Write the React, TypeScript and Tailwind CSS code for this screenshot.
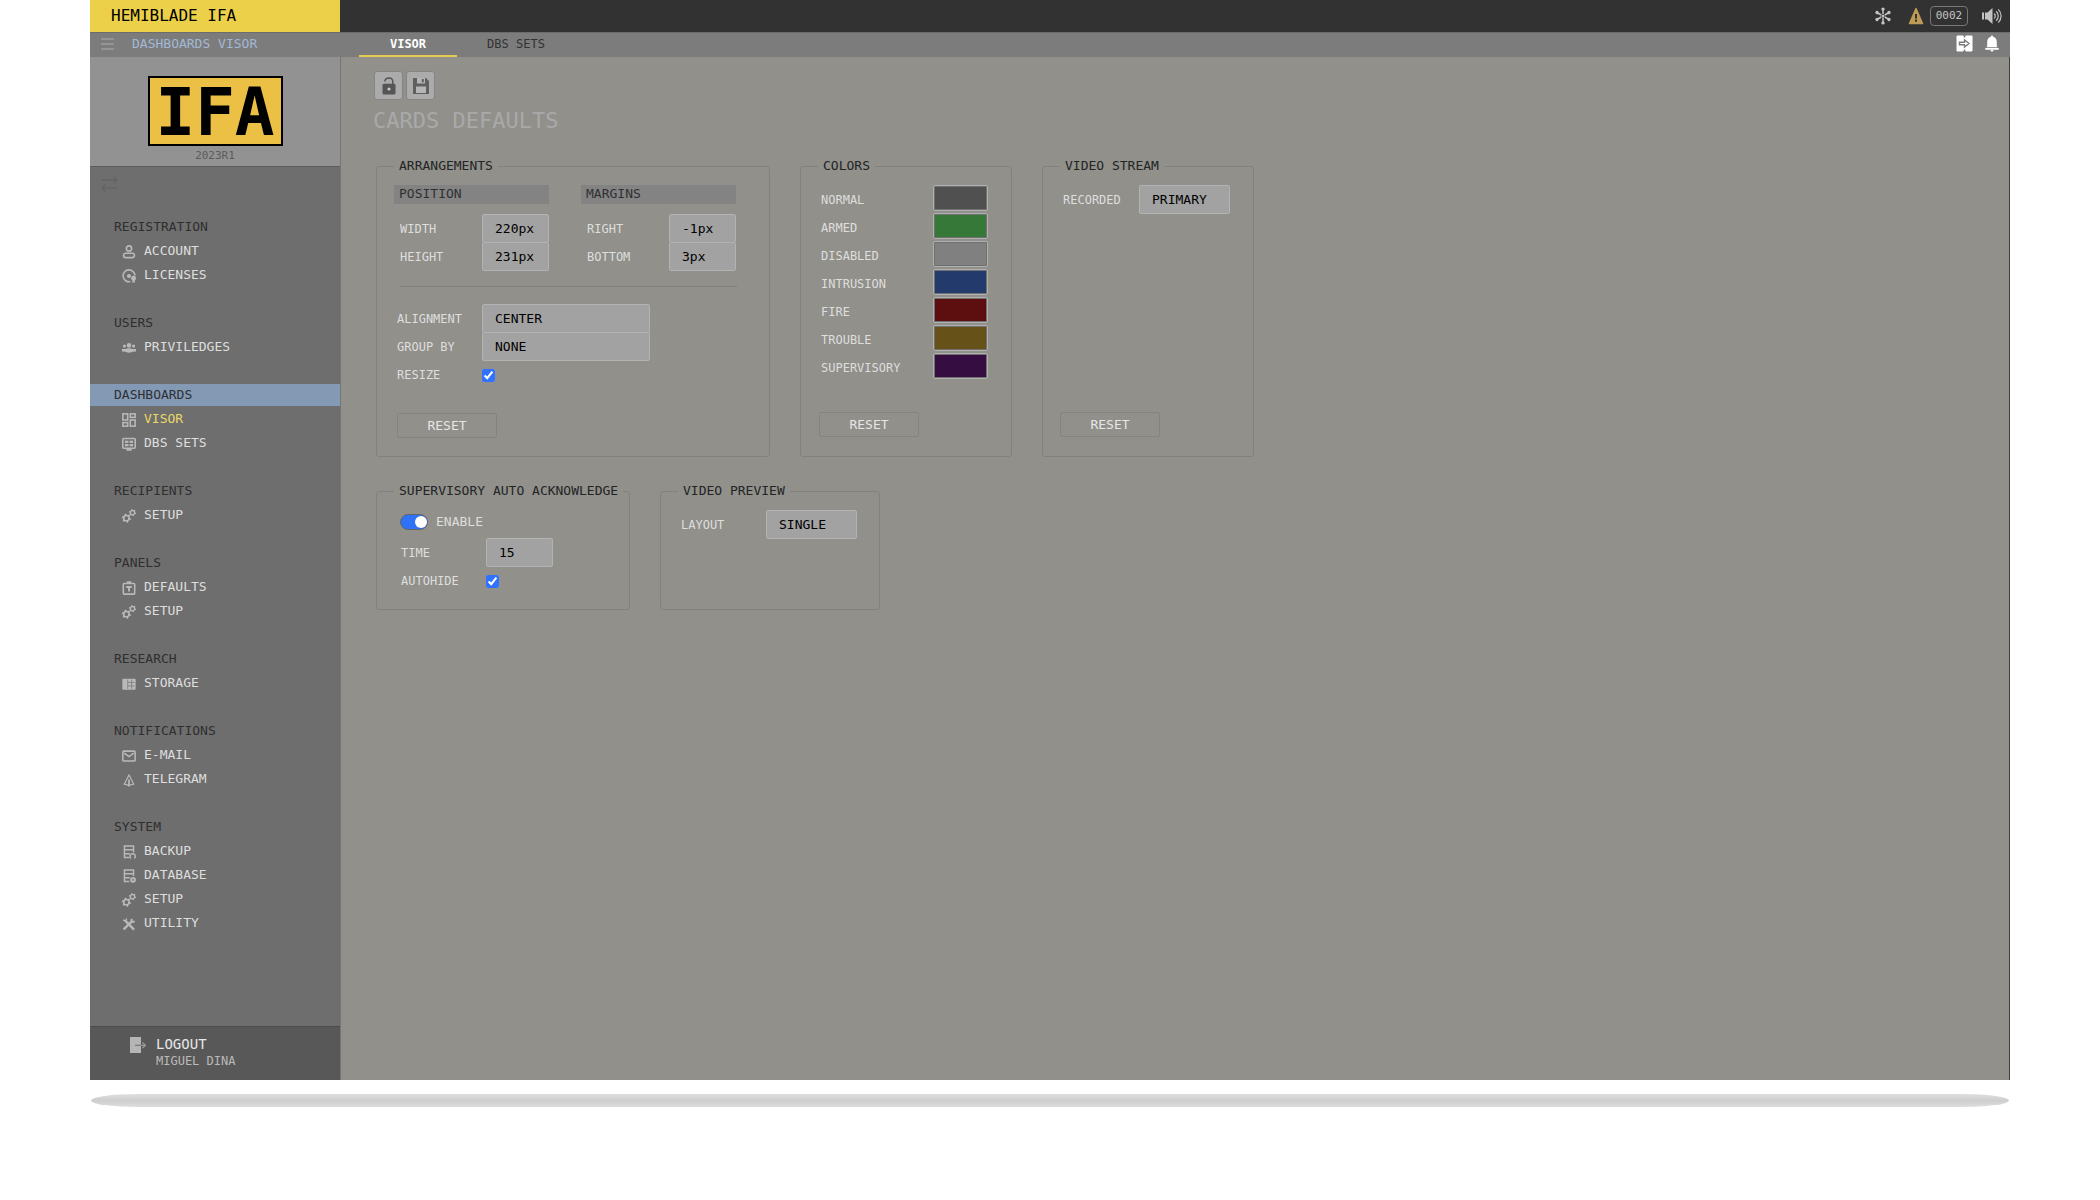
import React from "react";

const inputBase =
  "h-[29px] appearance-none rounded-[2px] border border-[#b3b3b3] bg-[#a2a2a2] pl-3 text-[13px] text-black outline-none";

function Icon({ children }: { children: React.ReactNode }) {
  return (
    <svg
      viewBox="0 0 16 16"
      className="h-3.5 w-3.5 shrink-0"
      fill="none"
      stroke="currentColor"
      strokeWidth="1.8"
      aria-hidden="true"
    >
      {children}
    </svg>
  );
}

function gearPath(cx: number, cy: number, r: number) {
  const pts: string[] = [];
  for (let i = 0; i < 24; i++) {
    const a = (i / 24) * Math.PI * 2 + 0.13;
    const rad = i % 4 < 2 ? r : r * 0.75;
    pts.push(`${(cx + rad * Math.cos(a)).toFixed(2)} ${(cy + rad * Math.sin(a)).toFixed(2)}`);
  }
  return `M${pts.join("L")}Z`;
}

const icons = {
  account: (
    <Icon>
      <circle cx="8" cy="4" r="3" />
      <rect x="1.800" y="9.400" width="12.400" height="5" rx="2.500" />
    </Icon>
  ),
  licenses: (
    <Icon>
      <path d="M14.800 7.500a6.800 6.800 0 1 0-5.300 6.900" />
      <circle cx="8" cy="8" r="2.400" fill="currentColor" stroke="none" />
      <circle cx="13.200" cy="10.500" r="2.800" fill="currentColor" stroke="none" />
      <path d="M11.800 12h2.800v4L13.200 15.200 11.800 16Z" fill="currentColor" stroke="none" />
    </Icon>
  ),
  people: (
    <Icon>
      <g fill="currentColor" stroke="none">
        <circle cx="8" cy="5" r="2.600" />
        <circle cx="2.800" cy="5.800" r="1.800" />
        <circle cx="13.200" cy="5.800" r="1.800" />
        <path d="M4 9Q8 7.500 12 9L16 9.200V12L12 12.200Q8 14.500 4 12.200L0 12V9.200Z" />
      </g>
    </Icon>
  ),
  dashboard: (
    <Icon>
      <rect x="1" y="1" width="5.500" height="7" />
      <rect x="9.500" y="1" width="5.500" height="4" />
      <rect x="1" y="11" width="5.500" height="4" />
      <rect x="9.500" y="8" width="5.500" height="7" />
    </Icon>
  ),
  sets: (
    <Icon>
      <rect x=".9" y="1.800" width="14.200" height="11" rx="1" />
      <path d="M5 14.700h6" strokeWidth="2" />
      <g fill="currentColor" stroke="none">
        <rect x="3.300" y="4.200" width="4.100" height="2.600" />
        <rect x="8.600" y="4.200" width="4.100" height="2.600" />
        <rect x="3.300" y="8" width="4.100" height="2.600" />
        <rect x="8.600" y="8" width="4.100" height="2.600" />
      </g>
    </Icon>
  ),
  cogs: (
    <Icon>
      <g fill="currentColor" fillRule="evenodd" stroke="none">
        <path d={`${gearPath(5, 10.5, 5.2)}M7.200 10.500a2.200 2.200 0 1 0-4.400 0a2.200 2.200 0 1 0 4.400 0Z`} />
        <path d={`${gearPath(12, 4.2, 4.1)}M13.700 4.200a1.700 1.700 0 1 0-3.400 0a1.700 1.700 0 1 0 3.400 0Z`} />
      </g>
    </Icon>
  ),
  clip: (
    <Icon>
      <rect x="1.500" y="2.800" width="13" height="12.200" rx="1" />
      <path d="M5.500 1.500h5" strokeWidth="2.400" />
      <path d="M4.800 6.800h6.400M8 6.800v5.200" strokeWidth="2.200" />
    </Icon>
  ),
  storage: (
    <Icon>
      <rect x=".4" y="2" width="15.200" height="12.500" rx="1" fill="currentColor" stroke="none" />
      <path d="M6.500 6.200h8M6.500 10.200h8M6.500 3v10.500M11 3v10.500" stroke="#7d7d7d" strokeWidth=".9" />
    </Icon>
  ),
  mail: (
    <Icon>
      <rect x="1" y="2.400" width="14" height="11.400" rx="1" />
      <path d="M2.500 4.800 8 8.600 13.500 4.800" />
    </Icon>
  ),
  telegram: (
    <Icon>
      <path d="M8 2.300 13.400 12.600 8 14 2.600 12.600Z" strokeWidth="1.400" />
      <path d="M8 7.500v8" strokeWidth="2" />
    </Icon>
  ),
  backup: (
    <Icon>
      <path d="M8.500 14.200H2.800V1.200H13.200V8.500M3 5.500h10M3 10h6" strokeWidth="1.700" />
      <path d="M10.300 15.200a3 3 0 1 1 3.800 0" strokeWidth="1.700" />
    </Icon>
  ),
  database: (
    <Icon>
      <path d="M8.500 14.200H2.800V1.200H13.200V8M3 5.500h10M3 10h6" strokeWidth="1.700" />
      <circle cx="12.600" cy="12.400" r="2.200" strokeWidth="2.200" />
    </Icon>
  ),
  tools: (
    <Icon>
      <path d="M4 4.500 13.800 14.300" strokeWidth="2.800" />
      <path d="M1.800 14.200 11 5.300" strokeWidth="2.800" />
      <path d="M1.300 3.500 4.800 5 5 1.800" strokeWidth="1.800" />
      <path d="M11 2v3.500h3.500" strokeWidth="2.200" />
    </Icon>
  ),
};

type IconName = keyof typeof icons;
type Group = { title: string; active?: boolean; items: { label: string; icon: IconName; active?: boolean }[] };

const groups: Group[] = [
  { title: "REGISTRATION", items: [{ label: "ACCOUNT", icon: "account" }, { label: "LICENSES", icon: "licenses" }] },
  { title: "USERS", items: [{ label: "PRIVILEDGES", icon: "people" }] },
  {
    title: "DASHBOARDS",
    active: true,
    items: [{ label: "VISOR", icon: "dashboard", active: true }, { label: "DBS SETS", icon: "sets" }],
  },
  { title: "RECIPIENTS", items: [{ label: "SETUP", icon: "cogs" }] },
  { title: "PANELS", items: [{ label: "DEFAULTS", icon: "clip" }, { label: "SETUP", icon: "cogs" }] },
  { title: "RESEARCH", items: [{ label: "STORAGE", icon: "storage" }] },
  { title: "NOTIFICATIONS", items: [{ label: "E-MAIL", icon: "mail" }, { label: "TELEGRAM", icon: "telegram" }] },
  {
    title: "SYSTEM",
    items: [
      { label: "BACKUP", icon: "backup" },
      { label: "DATABASE", icon: "database" },
      { label: "SETUP", icon: "cogs" },
      { label: "UTILITY", icon: "tools" },
    ],
  },
];

const cardColors = [
  { label: "NORMAL", value: "#505050" },
  { label: "ARMED", value: "#357838" },
  { label: "DISABLED", value: "#808080" },
  { label: "INTRUSION", value: "#223a6c" },
  { label: "FIRE", value: "#5c0f0e" },
  { label: "TROUBLE", value: "#665218" },
  { label: "SUPERVISORY", value: "#350d40" },
];

function Panel({ title, className, children }: { title: string; className: string; children: React.ReactNode }) {
  return (
    <fieldset className={`flex flex-col rounded-[3px] border border-[#818181] pl-[17px] pt-[9px] ${className}`}>
      <legend className="px-[5px] text-[13px] leading-5 text-[#222426]">{title}</legend>
      {children}
    </fieldset>
  );
}

function ResetButton({ className }: { className: string }) {
  return (
    <button
      type="button"
      className={`mt-auto h-[25px] w-[100px] rounded-[2px] border border-[#838383] text-[13px] text-[#e6e6e6] ${className}`}
    >
      RESET
    </button>
  );
}

function SizeField({ id, label, value, className }: { id: string; label: string; value: string; className: string }) {
  return (
    <div className={`flex items-center justify-between pl-1.5 ${className}`}>
      <label htmlFor={id} className="text-[12px] text-[#dedede]">
        {label}
      </label>
      <input id={id} defaultValue={value} className={`${inputBase} w-[67px]`} />
    </div>
  );
}

function SelectBox({ id, value, className }: { id: string; value: string; className: string }) {
  return (
    <select id={id} defaultValue={value} className={`${inputBase} ${className}`}>
      <option>{value}</option>
    </select>
  );
}

function TopBar() {
  return (
    <header className="flex h-[33px] border-b border-[#6c6c6c] bg-[#323232]">
      <div className="flex w-[250px] items-center bg-[#ecd049] pl-[21px] text-[16px] text-black">HEMIBLADE IFA</div>
      <div className="ml-auto flex items-center pr-2 text-[#c4c4c4]">
        <svg viewBox="0 0 18 18" className="mr-4 h-[18px] w-[18px]" aria-hidden="true">
          {[0, 60, 120, 180, 240, 300].map((a) => (
            <g key={a} transform={`rotate(${a} 9 9)`} fill="currentColor">
              <path d="M9 7V2.500" stroke="currentColor" strokeWidth="1.500" />
              <circle cx="9" cy="2.100" r="1.700" />
            </g>
          ))}
          <circle cx="9" cy="9" r="1.500" fill="currentColor" />
        </svg>
        <svg viewBox="0 0 16 18" className="mr-1.5 h-[18px] w-4" aria-hidden="true">
          <path d="M8 1.500 14.500 16.500H1.500Z" fill="#bd9b56" stroke="#bd9b56" strokeWidth="1.500" strokeLinejoin="round" />
          <path d="M8 7v4.500M8 12.600v2.200" stroke="#323232" strokeWidth="2" />
        </svg>
        <span className="mr-3.5 flex h-5 w-[38px] items-center justify-center rounded-[4px] border border-[#777777] text-[11px]">
          0002
        </span>
        <svg viewBox="0 0 20 18" className="h-[18px] w-5" fill="none" stroke="currentColor" strokeWidth="1.200" aria-hidden="true">
          <path d="M0 5.500h2v7H0ZM3 5.500h2.500L10.500 1v16L5.500 12.500H3Z" fill="currentColor" stroke="none" />
          <path d="M12.200 6.500a3.500 3.500 0 0 1 0 5M14.200 4.300a6.500 6.500 0 0 1 0 9.400M16.300 2.300a9.500 9.500 0 0 1 0 13.400" />
        </svg>
      </div>
    </header>
  );
}

function TabBar() {
  return (
    <div className="flex h-6 bg-[#7c7c7c]">
      <div className="flex w-[250px] items-center pb-0.5 pl-2.5 text-[13px] text-[#a2b8d6]">
        <button type="button" aria-label="Toggle menu" className="mr-[17px] text-[#959595]">
          <svg viewBox="0 0 15 14" className="h-3.5 w-[15px]" stroke="currentColor" strokeWidth="2" aria-hidden="true">
            <path d="M1 2h13M1 7h13M1 12h13" />
          </svg>
        </button>
        DASHBOARDS VISOR
      </div>
      <nav className="ml-[19px] flex gap-2.5 text-[12px]">
        <a href="#visor" className="flex w-[98px] items-center justify-center border-b-2 border-[#e6cc4e] font-bold text-white">
          VISOR
        </a>
        <a href="#sets" className="flex w-[98px] items-center justify-center border-b-2 border-transparent text-[#333333]">
          DBS SETS
        </a>
      </nav>
      <div className="ml-auto flex items-center gap-3 pb-1 pr-[11px] text-white">
        <button type="button" aria-label="Switch view">
          <svg viewBox="0 0 17 17" className="h-[17px] w-[17px]" aria-hidden="true">
            <path d="M1 1h6.200v2h2.600V1H16v15H9.800v-2H7.200v2H1Z" fill="currentColor" stroke="currentColor" />
            <path d="M3.500 7.200h5V5l4.500 3.500L8.500 12V9.800h-5Z" fill="white" stroke="#7c7c7c" strokeWidth="1.400" />
          </svg>
        </button>
        <button type="button" aria-label="Alerts">
          <svg viewBox="0 0 14 17" className="h-[17px] w-3.5" fill="currentColor" aria-hidden="true">
            <path d="M7 0 8.200 1.800C10.700 2.400 11.800 4.500 11.800 7v4.200l.8 1H1.400l.8-1V7c0-2.500 1.100-4.600 3.600-5.200ZM.3 12.900h13.400v1.800H.3ZM5.200 15h3.600L7 17Z" />
          </svg>
        </button>
      </div>
    </div>
  );
}

function Sidebar() {
  return (
    <aside className="flex w-[251px] shrink-0 flex-col border-r border-[#747474] bg-[#6e6e6e] text-[13px]">
      <div className="flex h-[110px] flex-col items-center border-b border-[#5c5c5c] bg-[#929292] pt-[19px]">
        <div className="flex h-[70px] w-[135px] items-center justify-center border-2 border-black bg-[#ecc045] pt-1 text-[66px] font-bold leading-none text-black">
          IFA
        </div>
        <span className="mt-0.5 text-[11px] leading-4 text-[#5b5b5b]">2023R1</span>
      </div>
      <button type="button" aria-label="Swap side" className="mb-[23px] ml-[11px] mt-2 flex h-[17px] w-[17px] text-[#636363]">
        <svg viewBox="0 0 17 17" className="h-[17px] w-[17px]" fill="none" stroke="currentColor" strokeWidth="1.300" aria-hidden="true">
          <path d="M1 5h15M12.500 1.500 16 5l-3.500 3.500M16 13.200H1M4.500 10 1 13.200l3.500 3.500" />
        </svg>
      </button>
      <nav>
        {groups.map((g) => (
          <section key={g.title} className="mb-6 flex flex-col">
            <h2
              className={
                g.active
                  ? "my-px h-[22px] bg-[#8499b4] pl-6 leading-[22px] text-[#2d3034]"
                  : "my-px h-[22px] pl-6 leading-[22px] text-[#2f2f2f]"
              }
            >
              {g.title}
            </h2>
            {g.items.map((it) => (
              <a key={it.label} href={`#${it.label.toLowerCase()}`} className="flex h-6 items-center gap-2 pl-8 text-[#dedede]">
                <span className="pt-0.5 text-[#b9b9b9]">{icons[it.icon]}</span>
                <span className={it.active ? "text-[#e9d769]" : ""}>{it.label}</span>
              </a>
            ))}
          </section>
        ))}
      </nav>
      <div className="mt-auto flex h-[54px] gap-2.5 border-t border-[#4b4b4b] bg-[#585858] pl-10 pt-[9px]">
        <svg viewBox="0 0 16 16" className="mt-px h-4 w-4" fill="none" aria-hidden="true">
          <path d="M0 0h11v16H0Z" fill="#b5b5b5" />
          <path d="M5 8.300h6" stroke="#777777" strokeWidth="1.200" />
          <path d="M11 8.300h4.500M12.500 5.500 15.500 8.300 12.500 11" stroke="#9b9b9b" strokeWidth="1.200" />
        </svg>
        <div>
          <a href="#logout" className="block text-[14px] leading-4 text-[#e6e6e6]">
            LOGOUT
          </a>
          <div className="text-[12px] leading-[18px] text-[#bababa]">MIGUEL DINA</div>
        </div>
      </div>
    </aside>
  );
}

function Arrangements() {
  return (
    <Panel title="ARRANGEMENTS" className="w-[394px] pb-[18px] pr-8">
      <div className="grid grid-cols-[155px_155px] gap-x-8">
        <h3 className="mb-2.5 h-[19px] bg-[#838383] pl-[5px] text-[13px] leading-[18px] text-[#303030]">POSITION</h3>
        <h3 className="mb-2.5 h-[19px] bg-[#838383] pl-[5px] text-[13px] leading-[18px] text-[#303030]">MARGINS</h3>
        <SizeField id="width" label="WIDTH" value="220px" className="" />
        <SizeField id="right" label="RIGHT" value="-1px" className="" />
        <SizeField id="height" label="HEIGHT" value="231px" className="-mt-px" />
        <SizeField id="bottom" label="BOTTOM" value="3px" className="-mt-px" />
      </div>
      <hr className="mb-[17px] ml-1.5 mt-[15px] border-[#7f7f7f]" />
      <div className="grid grid-cols-[85px_168px] items-center pl-[3px] text-[12px] text-[#dedede]">
        <label htmlFor="alignment">ALIGNMENT</label>
        <SelectBox id="alignment" value="CENTER" className="w-full" />
        <label htmlFor="group">GROUP BY</label>
        <SelectBox id="group" value="NONE" className="-mt-px w-full" />
        <label htmlFor="resize" className="leading-7">
          RESIZE
        </label>
        <input id="resize" type="checkbox" defaultChecked className="h-[13px] w-[13px] accent-[#2f72ff]" />
      </div>
      <div className="h-6" />
      <ResetButton className="ml-[3px]" />
    </Panel>
  );
}

export default function App() {
  return (
    <div className="flex min-h-screen flex-col bg-white px-[90px] font-['DejaVu_Sans_Mono',monospace]">
      <div className="flex flex-1 flex-col">
        <TopBar />
        <TabBar />
        <div className="flex flex-1">
          <Sidebar />
          <main className="flex-1 border-r border-[#404040] bg-[#91908a] pl-[33px] pt-3.5">
            <div className="flex gap-[3px]">
              <button
                type="button"
                aria-label="Unlock"
                className="flex h-[29px] w-[29px] items-center justify-center rounded-[3px] border border-[#858585] bg-[#ababab] text-[#555555]"
              >
                <svg viewBox="0 0 14 18" className="h-[18px] w-3.5" aria-hidden="true">
                  <path d="M2.800 4.500C3.500-.2 10.800-.2 10.800 5v3" fill="none" stroke="currentColor" strokeWidth="1.500" />
                  <rect x=".5" y="6.800" width="13" height="10.700" rx="1.500" fill="currentColor" />
                  <circle cx="7" cy="12" r="1.600" fill="#c8c8c8" />
                </svg>
              </button>
              <button
                type="button"
                aria-label="Save"
                className="flex h-[29px] w-[29px] items-center justify-center rounded-[3px] border border-[#858585] bg-[#ababab] text-[#5f5f5f]"
              >
                <svg viewBox="0 0 18 18" className="h-[18px] w-[18px]" aria-hidden="true">
                  <path d="M1 1h13l3 3v13H1Z" fill="currentColor" />
                  <path d="M5 1h8v5.500H5Z" fill="#b5b5b5" />
                  <path d="M9.800 2h2v3.300h-2Z" fill="currentColor" />
                  <path d="M4 9.500h10V16H4Z" fill="#b5b5b5" />
                </svg>
              </button>
            </div>
            <h1 className="-ml-px mt-[5px] text-[22px] leading-8 text-[#a9a9a9]">CARDS DEFAULTS</h1>
            <form className="ml-0.5 mt-[19px] flex flex-col gap-6">
              <div className="flex gap-[30px]">
                <Arrangements />
                <Panel title="COLORS" className="w-[212px] pb-[19px] pr-[23px]">
                  {cardColors.map((c) => (
                    <div key={c.label} className="flex h-7 items-start justify-between pl-[3px]">
                      <label htmlFor={c.label} className="text-[12px] leading-[30px] text-[#dedede]">
                        {c.label}
                      </label>
                      <input
                        id={c.label}
                        type="color"
                        defaultValue={c.value}
                        className="h-[26px] w-[55px] appearance-none rounded-[2px] border border-[#b0b0b0] bg-[#707070] p-0 [&::-webkit-color-swatch-wrapper]:p-px [&::-webkit-color-swatch]:border-none"
                      />
                    </div>
                  ))}
                  <ResetButton className="ml-px" />
                </Panel>
                <Panel title="VIDEO STREAM" className="w-[212px] pb-[19px] pr-[23px]">
                  <div className="flex items-center justify-between pl-[3px]">
                    <label htmlFor="recorded" className="text-[12px] text-[#dedede]">
                      RECORDED
                    </label>
                    <SelectBox id="recorded" value="PRIMARY" className="w-[91px]" />
                  </div>
                  <ResetButton className="" />
                </Panel>
              </div>
              <div className="flex gap-[30px]">
                <Panel title="SUPERVISORY AUTO ACKNOWLEDGE" className="w-[254px] pb-3.5">
                  <div className="mb-1 flex h-6 items-center gap-2 pl-1.5">
                    <input
                      id="enable"
                      type="checkbox"
                      role="switch"
                      defaultChecked
                      className="relative h-4 w-7 appearance-none rounded-full border border-[#666666] bg-[#2f72f5] before:absolute before:right-0 before:top-px before:h-3 before:w-3 before:rounded-full before:bg-white"
                    />
                    <label htmlFor="enable" className="text-[13px] leading-5 text-[#dedede]">
                      ENABLE
                    </label>
                  </div>
                  <div className="grid grid-cols-[85px_67px] items-center pl-[7px] text-[12px] text-[#dedede]">
                    <label htmlFor="time">TIME</label>
                    <input id="time" defaultValue="15" className={`${inputBase} w-full`} />
                    <label htmlFor="autohide" className="leading-7">
                      AUTOHIDE
                    </label>
                    <input id="autohide" type="checkbox" defaultChecked className="h-[13px] w-[13px] accent-[#2f72ff]" />
                  </div>
                </Panel>
                <Panel title="VIDEO PREVIEW" className="w-[220px] pr-[22px]">
                  <div className="flex items-center justify-between pl-[3px]">
                    <label htmlFor="layout" className="text-[12px] text-[#dedede]">
                      LAYOUT
                    </label>
                    <SelectBox id="layout" value="SINGLE" className="w-[91px]" />
                  </div>
                </Panel>
              </div>
            </form>
          </main>
        </div>
      </div>
      <div className="h-[120px] pt-3.5">
        <div className="mx-px h-[13px] rounded-[50px/7px] bg-linear-to-b from-[#dedede] via-[#cecece] to-[#dedede]" />
      </div>
    </div>
  );
}
